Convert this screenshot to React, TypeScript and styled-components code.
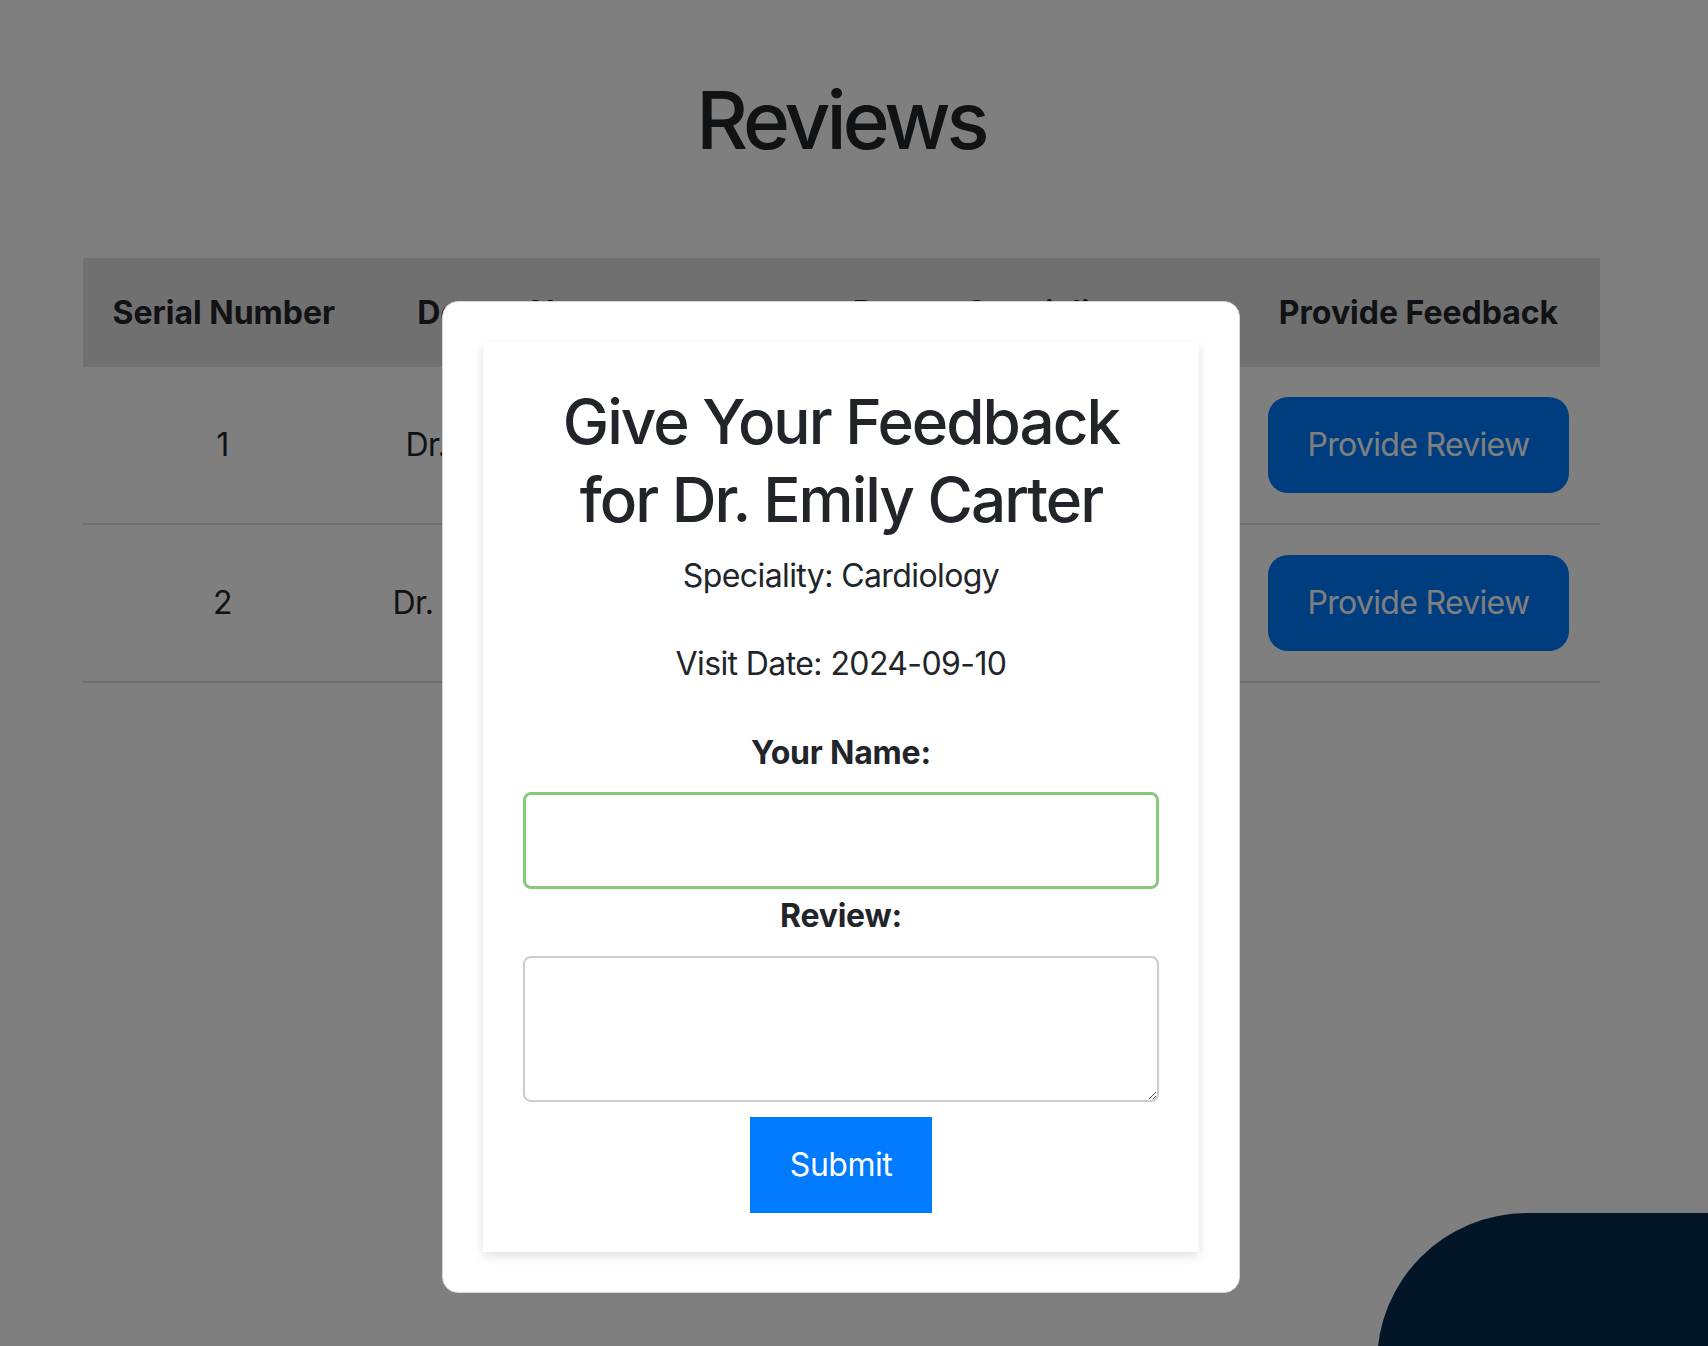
import React, { useState } from 'react';
import styled, { createGlobalStyle } from 'styled-components';

const GlobalStyle = createGlobalStyle`
  * {
    box-sizing: border-box;
  }
  html,
  body {
    margin: 0;
    padding: 0;
    background: #ffffff;
  }
  body {
    font-family: Inter, 'Noto Sans', 'Liberation Sans', sans-serif;
    font-size: 32px;
    line-height: 1.5;
    color: #212529;
  }
`;

const Page = styled.div`
  width: 1682px;
  min-height: 1346px;
  padding-top: 72px;
`;

const Title = styled.h1`
  margin: 0 0 90px;
  font-size: 80px;
  font-weight: 500;
  line-height: 96px;
  text-align: center;
  letter-spacing: -4px;
`;

const Table = styled.table`
  width: 1517px;
  margin: 0 auto;
  border-collapse: collapse;
  table-layout: fixed;
`;

const HeadCell = styled.th<{ w?: number; shift?: number }>`
  width: ${({ w }) => (w ? `${w}px` : 'auto')};
  height: 109px;
  padding: 0 30px 0 ${({ shift = 0 }) => 30 + shift}px;
  background: #e0e0e0;
  font-weight: 700;
  text-align: center;
  white-space: nowrap;
`;

const Row = styled.tr`
  border-bottom: 2px solid #dddddd;
`;

const Cell = styled.td`
  padding: 30px;
  text-align: center;
  vertical-align: middle;
  white-space: nowrap;
  letter-spacing: -0.5px;
`;

const ReviewButton = styled.button`
  padding: 24px 40px;
  border: none;
  border-radius: 20px;
  background: #007bff;
  color: #ffffff;
  font-family: inherit;
  font-size: 32px;
  line-height: 48px;
  letter-spacing: -0.7px;
  cursor: pointer;
`;

const ChatBubble = styled.div`
  position: fixed;
  left: 1377px;
  top: 1213px;
  width: 420px;
  height: 300px;
  border-radius: 150px 0 0 0;
  background: #042c51;
`;

const Overlay = styled.div`
  position: fixed;
  inset: 0;
  background: rgba(0, 0, 0, 0.5);
`;

const Modal = styled.div`
  position: absolute;
  top: 301px;
  left: 442px;
  width: 798px;
  padding: 40px;
  background: #ffffff;
  border: 1px solid #d7d7d7;
  border-radius: 16px;
`;

const FormCard = styled.form`
  display: flex;
  flex-direction: column;
  align-items: center;
  padding: 41px 40px 39px;
  background: #ffffff;
  box-shadow: 0 4px 10px rgba(0, 0, 0, 0.12);
  text-align: center;
`;

const FormTitle = styled.h2`
  margin: 0 0 13px;
  font-size: 62px;
  font-weight: 500;
  line-height: 78px;
  letter-spacing: -2px;
`;

const Info = styled.p<{ gap: number }>`
  margin: 0 0 ${({ gap }) => gap}px;
  letter-spacing: -0.6px;
`;

const Label = styled.label<{ gap: number }>`
  display: block;
  margin: 0 0 ${({ gap }) => gap}px;
  font-weight: 700;
  letter-spacing: -0.2px;
`;

const NameInput = styled.input`
  display: block;
  width: 100%;
  height: 97px;
  margin: 0 0 3px;
  padding: 0 16px;
  border: 3px solid #88c87c;
  border-radius: 8px;
  font-family: inherit;
  font-size: 32px;
  outline: none;
`;

const ReviewArea = styled.textarea`
  display: block;
  width: 100%;
  height: 146px;
  margin: 0 0 15px;
  padding: 12px 16px;
  border: 2px solid #cccccc;
  border-radius: 8px;
  font-family: inherit;
  font-size: 32px;
`;

const SubmitButton = styled.button`
  padding: 24px 40px;
  border: none;
  background: #007bff;
  color: #ffffff;
  font-family: inherit;
  font-size: 32px;
  line-height: 48px;
  letter-spacing: -0.5px;
  cursor: pointer;
`;

const doctors = [
  { id: 1, name: 'Dr. Emily Carter', speciality: 'Cardiology', date: '2024-09-10' },
  { id: 2, name: 'Dr. Robert Johnson', speciality: 'Dermatology', date: '2024-09-12' },
];

function App() {
  const [name, setName] = useState('');
  const [review, setReview] = useState('');
  const current = doctors[0];

  return (
    <>
      <GlobalStyle />
      <Page>
        <Title>Reviews</Title>
        <Table>
          <thead>
            <tr>
              <HeadCell w={280}>Serial Number</HeadCell>
              <HeadCell w={314}>Doctor Name</HeadCell>
              <HeadCell shift={60}>Doctor Speciality</HeadCell>
              <HeadCell w={362}>Provide Feedback</HeadCell>
            </tr>
          </thead>
          <tbody>
            {doctors.map((doc) => (
              <Row key={doc.id}>
                <Cell>{doc.id}</Cell>
                <Cell>{doc.name}</Cell>
                <Cell>{doc.speciality}</Cell>
                <Cell>
                  <ReviewButton type="button">Provide Review</ReviewButton>
                </Cell>
              </Row>
            ))}
          </tbody>
        </Table>
      </Page>
      <ChatBubble />
      <Overlay>
        <Modal>
          <FormCard onSubmit={(e) => e.preventDefault()}>
            <FormTitle>
              Give Your Feedback
              <br />
              for {current.name}
            </FormTitle>
            <Info gap={40}>Speciality: {current.speciality}</Info>
            <Info gap={41}>Visit Date: {current.date}</Info>
            <Label htmlFor="name" gap={15}>
              Your Name:
            </Label>
            <NameInput id="name" value={name} onChange={(e) => setName(e.target.value)} />
            <Label htmlFor="review" gap={16}>
              Review:
            </Label>
            <ReviewArea id="review" value={review} onChange={(e) => setReview(e.target.value)} />
            <SubmitButton type="submit">Submit</SubmitButton>
          </FormCard>
        </Modal>
      </Overlay>
    </>
  );
}

export default App;
